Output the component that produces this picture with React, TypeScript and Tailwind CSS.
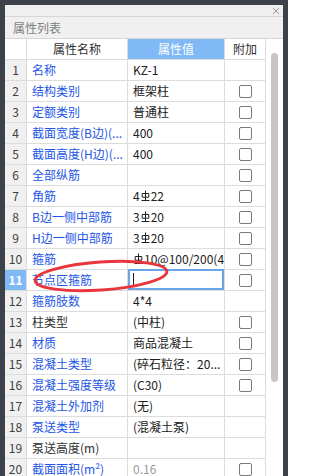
import React from 'react';

type Row = {
  name: string;
  value?: React.ReactNode;
  blue?: boolean;
  check?: boolean;
  grey?: boolean;
};

// 三级钢筋符号
const Rebar = () => (
  <svg width="9" height="12" viewBox="0 0 9 12" className="inline-block shrink-0 mx-[1px] align-[-1px]">
    <path d="M4.5 0.5V10.5M1.2 3.5H7.8V7.2H1.2ZM0.5 10.5H8.5" fill="none" stroke="#202020" strokeWidth="1" />
  </svg>
);

const rows: Row[] = [
  { name: '名称', value: 'KZ-1', blue: true },
  { name: '结构类别', value: '框架柱', blue: true, check: true },
  { name: '定额类别', value: '普通柱', blue: true, check: true },
  { name: '截面宽度(B边)(...', value: '400', blue: true, check: true },
  { name: '截面高度(H边)(...', value: '400', blue: true, check: true },
  { name: '全部纵筋', value: '', blue: true, check: true },
  { name: '角筋', value: <>4<Rebar />22</>, blue: true, check: true },
  { name: 'B边一侧中部筋', value: <>3<Rebar />20</>, blue: true, check: true },
  { name: 'H边一侧中部筋', value: <>3<Rebar />20</>, blue: true, check: true },
  { name: '箍筋', value: <><Rebar />10@100/200(4</>, blue: true, check: true },
  { name: '节点区箍筋', value: null, blue: true, check: true },
  { name: '箍筋肢数', value: '4*4', blue: true },
  { name: '柱类型', value: '(中柱)', check: true },
  { name: '材质', value: '商品混凝土', blue: true, check: true },
  { name: '混凝土类型', value: '(碎石粒径：20...', blue: true, check: true },
  { name: '混凝土强度等级', value: '(C30)', blue: true, check: true },
  { name: '混凝土外加剂', value: '(无)', blue: true },
  { name: '泵送类型', value: '(混凝土泵)', blue: true },
  { name: '泵送高度(m)', value: '' },
  { name: '截面面积(m²)', value: '0.16', blue: true, check: true, grey: true },
];

const Check = () => <div className="w-[13px] h-[13px] border border-[#7a7a7a] rounded-[2px] bg-white" />;

export default function App() {
  return (
    <div
      className="w-[288px] h-[476px] bg-[#3d424a] pt-[5px] px-[5px] overflow-hidden"
      style={{ fontFamily: '"Noto Sans CJK SC", "Microsoft YaHei", sans-serif' }}
    >
      <div className="relative h-full bg-white flex flex-col">
        {/* 标题栏 */}
        <div className="h-[12px] bg-[#efefef] border-b border-[#d6d6d6] flex items-center justify-end pr-[3px]">
          <svg width="8" height="8" viewBox="0 0 8 8">
            <path d="M1 1L7 7M7 1L1 7" stroke="#9a9a9a" strokeWidth="1" />
          </svg>
        </div>
        <div className="h-[22px] bg-[#f0f0f0] border-b border-[#d6d6d6] flex items-center pl-[8px] text-[12px] text-[#808080]">
          属性列表
        </div>

        <div className="flex flex-1 min-h-0">
          <div className="w-[261px] text-[12px] leading-none">
            {/* 表头 */}
            <div className="flex h-[21px] border-b border-[#dcdcdc]">
              <div className="w-[22px] border-r border-[#dcdcdc] bg-white" />
              <div className="w-[101px] border-r border-[#dcdcdc] flex items-center justify-center text-[#303030]">属性名称</div>
              <div className="w-[97px] border-r border-[#dcdcdc] bg-[#80b9f5] flex items-center justify-center text-white">属性值</div>
              <div className="w-[41px] border-r border-[#dcdcdc] flex items-center justify-center text-[#303030]">附加</div>
            </div>
            {rows.map((r, i) => {
              const active = i === 10;
              return (
                <div key={i} className="flex h-[21px] border-b border-[#dcdcdc]">
                  <div
                    className={
                      active
                        ? 'w-[22px] border-r border-[#dcdcdc] bg-[#80b9f5] text-white font-bold flex items-center justify-center'
                        : 'w-[22px] border-r border-[#dcdcdc] bg-[#f0f0f0] text-[#404040] flex items-center justify-center'
                    }
                  >
                    {i + 1}
                  </div>
                  <div
                    className={
                      r.blue
                        ? 'w-[101px] border-r border-[#dcdcdc] flex items-center pl-[5px] text-[#2355e6] whitespace-nowrap overflow-hidden'
                        : 'w-[101px] border-r border-[#dcdcdc] flex items-center pl-[5px] text-[#303030] whitespace-nowrap overflow-hidden'
                    }
                  >
                    {r.name}
                  </div>
                  {active ? (
                    <div className="w-[97px] border-r border-[#dcdcdc] flex">
                      <div className="flex-1 -mt-[1px] border-2 border-[#6aa6e6] flex items-center pl-[3px]">
                        <div className="w-[1px] h-[13px] bg-[#202020]" />
                      </div>
                    </div>
                  ) : (
                    <div
                      className={
                        r.grey
                          ? 'w-[97px] border-r border-[#dcdcdc] flex items-center pl-[5px] text-[#9a9a9a] overflow-hidden'
                          : 'w-[97px] border-r border-[#dcdcdc] flex items-center pl-[5px] text-[#202020] overflow-hidden'
                      }
                    >
                      <span className="whitespace-nowrap">{r.value}</span>
                    </div>
                  )}
                  <div className="w-[41px] border-r border-[#dcdcdc] flex items-center justify-center">
                    {r.check && <Check />}
                  </div>
                </div>
              );
            })}
          </div>
          {/* 滚动条 */}
          <div className="flex-1 bg-white pt-[14px] flex justify-center">
            <div className="w-[7px] h-[329px] rounded-full bg-[#c6c6c6]" />
          </div>
        </div>

        {/* 红色圈注 */}
        <svg className="absolute left-0 top-0 pointer-events-none" width="278" height="471" viewBox="0 0 278 471">
          <ellipse cx="96" cy="271" rx="66" ry="14" transform="rotate(-4 96 271)" fill="none" stroke="#e8363c" strokeWidth="3" />
        </svg>
      </div>
    </div>
  );
}
